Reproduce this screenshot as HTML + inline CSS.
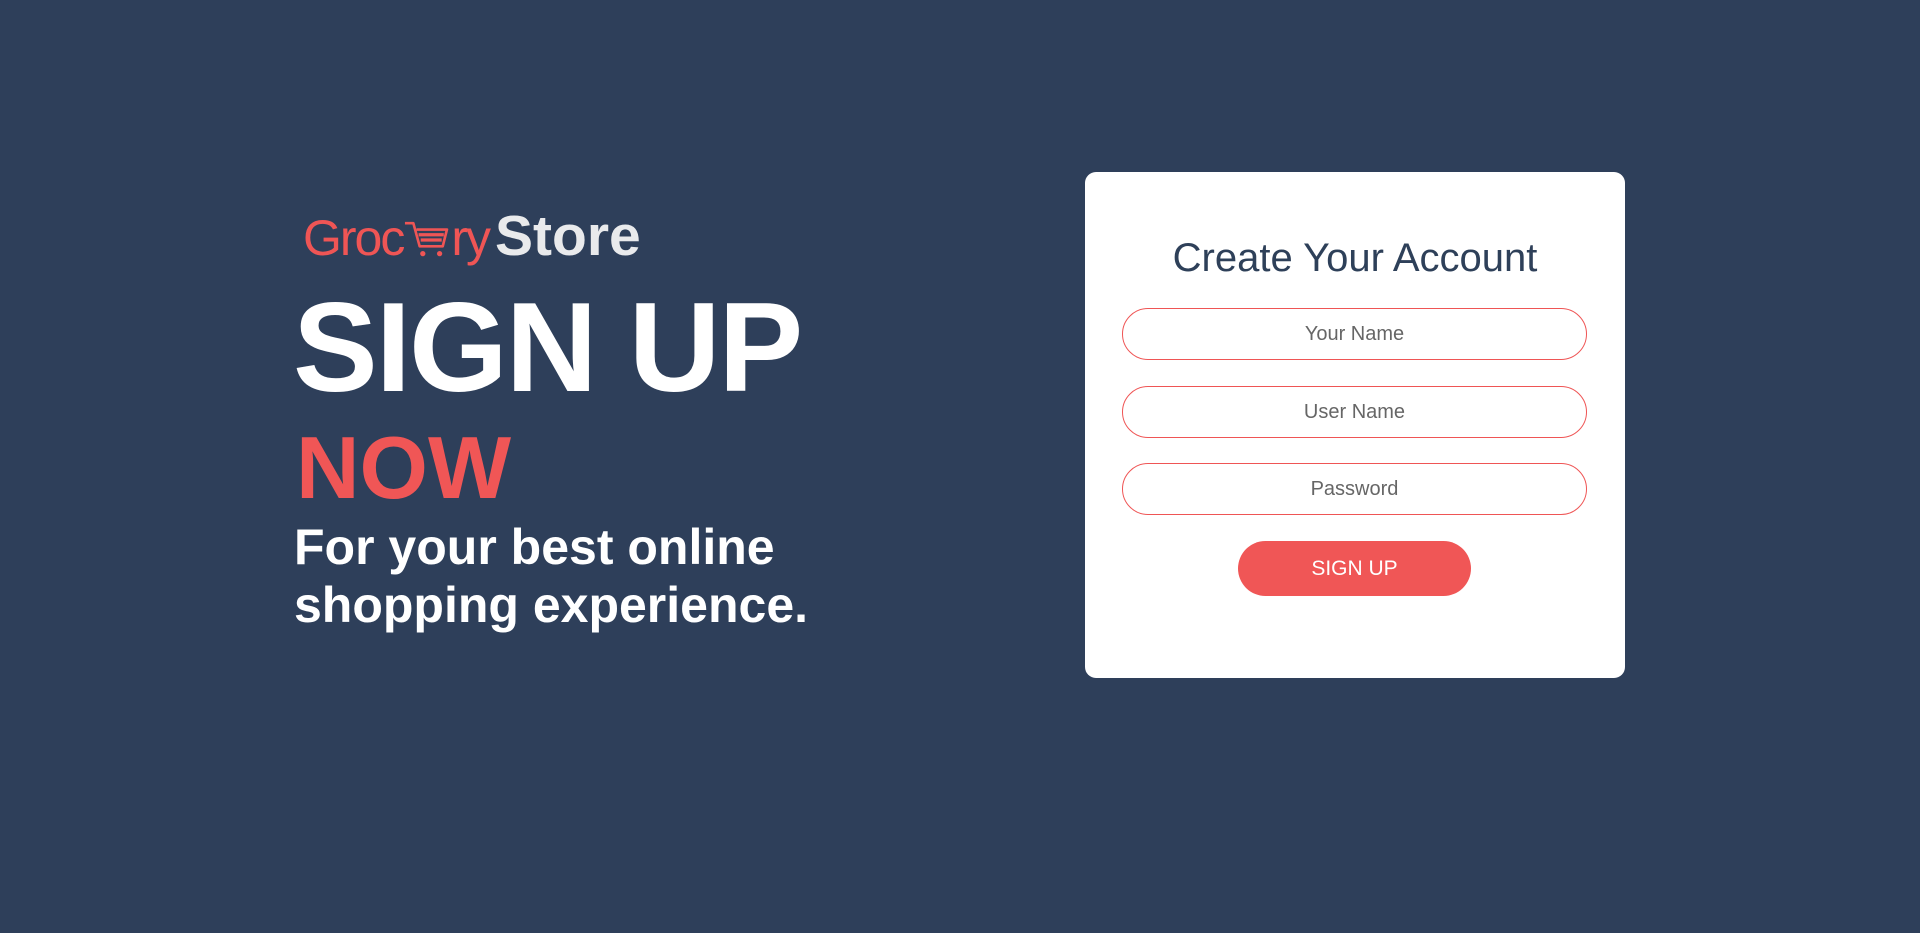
<!DOCTYPE html>
<html><head><meta charset="utf-8"><style>
html,body{margin:0;padding:0;width:1920px;height:933px;background:#2e3f5a;overflow:hidden;font-family:"Liberation Sans",Arial,sans-serif}
.abs{position:absolute;white-space:nowrap}
.logo{left:303px;top:206px;height:60px;font-size:50px;line-height:60px}
.logo .g{color:#ef5555;font-weight:normal;letter-spacing:-2px}
.logo .s{color:#e9eaec;font-weight:bold;font-size:57px;margin-left:6px}
.big{left:293px;top:277px;font-size:127px;font-weight:bold;color:#fff;line-height:140px;letter-spacing:-2px}
.now{left:296px;top:418px;font-size:88px;font-weight:bold;color:#f05656;line-height:100px}
.tag{left:294px;top:518px;font-size:50px;font-weight:bold;color:#fff;line-height:58px}
.card{position:absolute;left:1085px;top:172px;width:540px;height:506px;background:#fff;border-radius:11px}
.card h2{position:absolute;left:0;right:0;margin:0;text-align:center;font-weight:normal;font-size:40px;color:#2e4059}
.in{position:absolute;left:1122px;width:463px;height:50px;border:1px solid #ef5555;border-radius:27px;text-align:center;line-height:50px;font-size:20px;color:#666}
.btn{position:absolute;left:1238px;top:541px;width:233px;height:55px;background:#f05656;border-radius:28px;color:#fff;text-align:center;line-height:55px;font-size:21px}
</style></head><body>
<div class="abs logo"><span class="g">Groc</span><svg width="48" height="42" viewBox="0 0 44 40" style="vertical-align:-6px"><path d="M1 4 H9 L15 26 H37 L41 10 H12" fill="none" stroke="#ef5555" stroke-width="2.5" stroke-linejoin="round"/><path d="M14 15 H38 M16 20 H36" stroke="#ef5555" stroke-width="3"/><circle cx="18" cy="33" r="2.5" fill="#ef5555"/><circle cx="34" cy="33" r="2.5" fill="#ef5555"/></svg><span class="g">ry</span><span class="s">Store</span></div>
<div class="abs big">SIGN UP</div>
<div class="abs now">NOW</div>
<div class="abs tag">For your best online<br>shopping experience.</div>
<div class="card"><h2 style="top:64px">Create Your Account</h2></div>
<div class="in" style="top:308px">Your Name</div>
<div class="in" style="top:386px">User Name</div>
<div class="in" style="top:463px">Password</div>
<div class="btn">SIGN UP</div>
</body></html>
